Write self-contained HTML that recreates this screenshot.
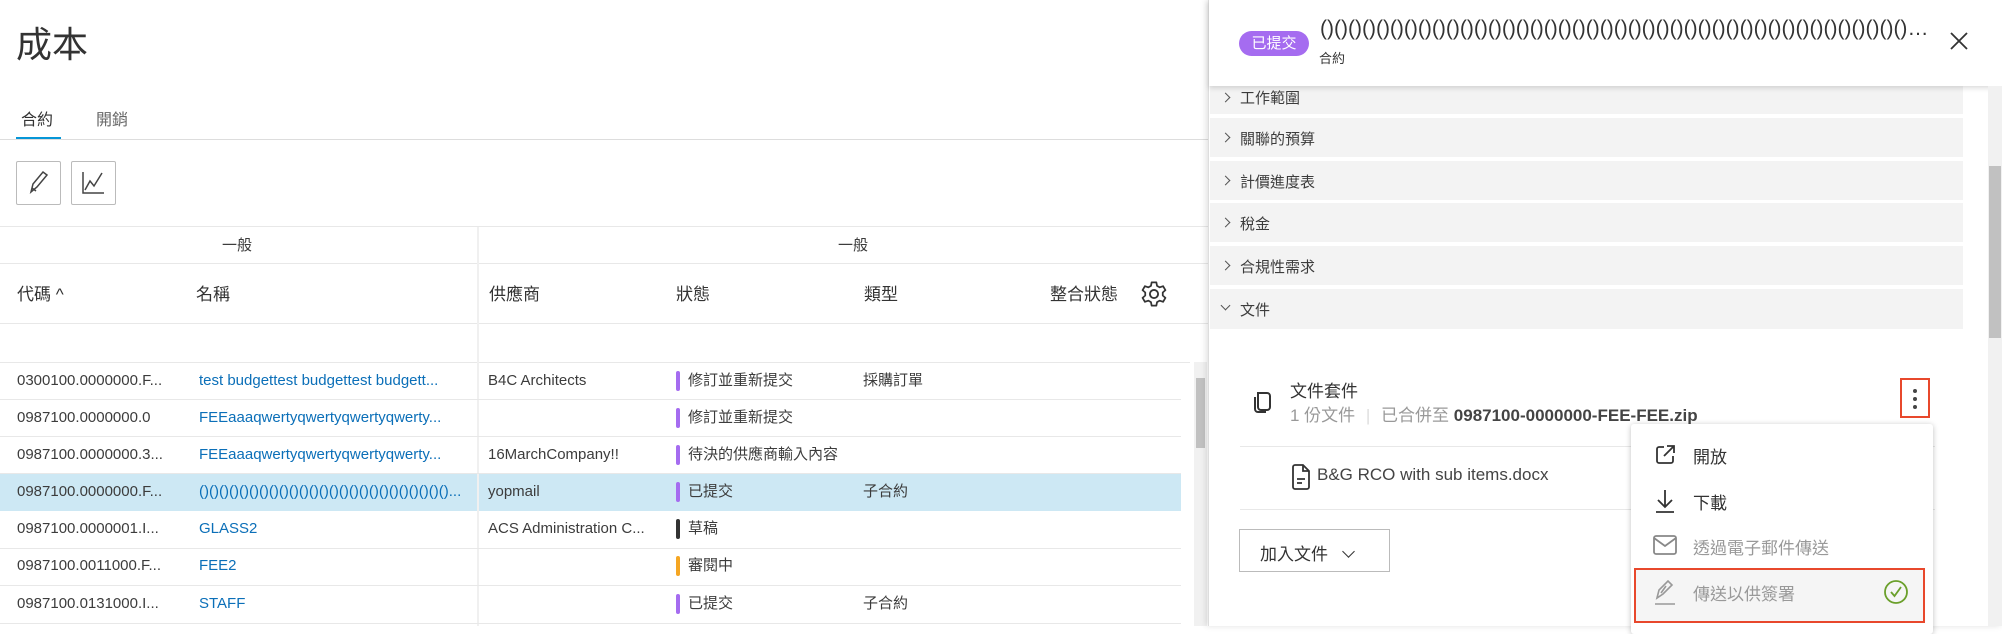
<!DOCTYPE html>
<html><head><meta charset="utf-8">
<style>
*{box-sizing:border-box;margin:0;padding:0}
body{width:2002px;height:626px;overflow:hidden;background:#fff;font-family:"Liberation Sans","Noto Sans CJK TC",sans-serif;color:#3c3c3c;position:relative}
.a{position:absolute;white-space:nowrap}
.t{font-size:15px;color:#3c3c3c;line-height:20px}
.lnk{color:#0b6fb8}
.bar{position:absolute;width:4px;height:20px;border-radius:2px}
.acc{position:absolute;left:1210px;width:753px;height:39px;background:#f3f3f3;font-size:15px;color:#3c3c3c}
.acc span{position:absolute;left:30px;top:10px}
.acc i{position:absolute;left:12px;top:16px;width:7px;height:7px;border-right:1.5px solid #555;border-top:1.5px solid #555;transform:rotate(45deg)}
.hl{position:absolute;left:0;height:1px;background:#e8e8e8}
</style></head><body>
<div class="a" style="left:16px;top:16px;font-size:36px;color:#333">成本</div>
<div class="a" style="left:21px;top:106px;font-size:16px;color:#333">合約</div>
<div class="a" style="left:96px;top:106px;font-size:16px;color:#666">開銷</div>
<div class="a" style="left:16px;top:137px;width:45px;height:3px;background:#0696d7"></div>
<div class="hl" style="top:139px;width:1209px;background:#ddd"></div>
<div class="a" style="left:16px;top:161px;width:45px;height:44px;border:1px solid #bbb;border-radius:2px"><svg width="43" height="42" viewBox="0 0 43 42"><path d="M14 30l2-8 10-12 4 3-10 12z M15 26l4 3" fill="none" stroke="#444" stroke-width="1.5"/></svg></div>
<div class="a" style="left:71px;top:161px;width:45px;height:44px;border:1px solid #bbb;border-radius:2px"><svg width="43" height="42" viewBox="0 0 43 42"><path d="M11 10v21h21 M13 28l5-9 4 5 8-13" fill="none" stroke="#444" stroke-width="1.5"/></svg></div>
<!-- table -->
<div class="hl" style="top:226px;width:1209px"></div>
<div class="a t" style="left:222px;top:236px">一般</div>
<div class="a t" style="left:838px;top:236px">一般</div>
<div class="hl" style="top:263px;width:1209px"></div>
<div class="a" style="left:17px;top:280px;font-size:17px;color:#333">代碼 ^</div>
<div class="a" style="left:196px;top:280px;font-size:17px;color:#333">名稱</div>
<div class="a" style="left:489px;top:280px;font-size:17px;color:#333">供應商</div>
<div class="a" style="left:676px;top:280px;font-size:17px;color:#333">狀態</div>
<div class="a" style="left:864px;top:280px;font-size:17px;color:#333">類型</div>
<div class="a" style="left:1050px;top:280px;font-size:17px;color:#333">整合狀態</div>
<svg class="a" style="left:1140px;top:280px" width="28" height="28" viewBox="0 0 24 24"><circle cx="12" cy="12" r="3.5" fill="none" stroke="#333" stroke-width="1.6"/><path d="M10 2h4l.6 3 2.3 1.3 2.9-1 2 3.4-2.3 2v2.6l2.3 2-2 3.4-2.9-1-2.3 1.3-.6 3h-4l-.6-3-2.3-1.3-2.9 1-2-3.4 2.3-2v-2.6l-2.3-2 2-3.4 2.9 1L9.4 5z" fill="none" stroke="#333" stroke-width="1.5" stroke-linejoin="round"/></svg>
<div class="hl" style="top:323px;width:1209px"></div>
<div class="hl" style="top:362px;width:1190px"></div>
<div class="a" style="left:0;top:474px;width:1181px;height:37px;background:#cde8f4"></div>
<div class="a" style="left:477px;top:227px;width:2px;height:399px;background:#f0f0f0"></div>
<div class="a" style="left:1194px;top:362px;width:13px;height:264px;background:#f1f1f1"></div>
<div class="a" style="left:1196px;top:378px;width:9px;height:70px;background:#c1c1c1"></div>
<div class="hl" style="top:399px;width:1181px"></div>
<div class="hl" style="top:436px;width:1181px"></div>
<div class="hl" style="top:473px;width:1181px"></div>
<div class="hl" style="top:548px;width:1181px"></div>
<div class="hl" style="top:585px;width:1181px"></div>
<div class="hl" style="top:623px;width:1181px"></div>
<!-- rows -->
<div class="a t" style="left:17px;top:371px">0300100.0000000.F...</div><div class="a t lnk" style="left:199px;top:371px">test budgettest budgettest budgett...</div><div class="a t" style="left:488px;top:371px">B4C Architects</div><div class="bar" style="left:676px;top:371px;background:#a56cf0"></div><div class="a t" style="left:688px;top:371px">修訂並重新提交</div><div class="a t" style="left:863px;top:371px">採購訂單</div>
<div class="a t" style="left:17px;top:408px">0987100.0000000.0</div><div class="a t lnk" style="left:199px;top:408px">FEEaaaqwertyqwertyqwertyqwerty...</div><div class="bar" style="left:676px;top:408px;background:#a56cf0"></div><div class="a t" style="left:688px;top:408px">修訂並重新提交</div>
<div class="a t" style="left:17px;top:445px">0987100.0000000.3...</div><div class="a t lnk" style="left:199px;top:445px">FEEaaaqwertyqwertyqwertyqwerty...</div><div class="a t" style="left:488px;top:445px">16MarchCompany!!</div><div class="bar" style="left:676px;top:445px;background:#a56cf0"></div><div class="a t" style="left:688px;top:445px">待決的供應商輸入內容</div>
<div class="a t" style="left:17px;top:482px">0987100.0000000.F...</div><div class="a t lnk" style="left:199px;top:482px">()()()()()()()()()()()()()()()()()()()()()()()()()...</div><div class="a t" style="left:488px;top:482px">yopmail</div><div class="bar" style="left:676px;top:482px;background:#a56cf0"></div><div class="a t" style="left:688px;top:482px">已提交</div><div class="a t" style="left:863px;top:482px">子合約</div>
<div class="a t" style="left:17px;top:519px">0987100.0000001.I...</div><div class="a t lnk" style="left:199px;top:519px">GLASS2</div><div class="a t" style="left:488px;top:519px">ACS Administration C...</div><div class="bar" style="left:676px;top:519px;background:#333"></div><div class="a t" style="left:688px;top:519px">草稿</div>
<div class="a t" style="left:17px;top:556px">0987100.0011000.F...</div><div class="a t lnk" style="left:199px;top:556px">FEE2</div><div class="bar" style="left:676px;top:556px;background:#f5a623"></div><div class="a t" style="left:688px;top:556px">審閱中</div>
<div class="a t" style="left:17px;top:594px">0987100.0131000.I...</div><div class="a t lnk" style="left:199px;top:594px">STAFF</div><div class="bar" style="left:676px;top:594px;background:#a56cf0"></div><div class="a t" style="left:688px;top:594px">已提交</div><div class="a t" style="left:863px;top:594px">子合約</div>
<!-- panel -->
<div class="a" style="left:1208px;top:0;width:794px;height:626px;background:#fff;border-left:1px solid #ddd;box-shadow:-2px 0 6px rgba(0,0,0,.12)"></div>
<div class="acc" style="top:81px;height:33px"><i style="top:13px"></i><span style="top:6px">工作範圍</span></div>
<div class="acc" style="top:118px"><i></i><span>關聯的預算</span></div>
<div class="acc" style="top:161px"><i></i><span>計價進度表</span></div>
<div class="acc" style="top:203px"><i></i><span>稅金</span></div>
<div class="acc" style="top:246px"><i></i><span>合規性需求</span></div>
<div class="acc" style="top:289px;height:40px"><i style="transform:rotate(135deg);top:13px"></i><span>文件</span></div>
<div class="a" style="left:1209px;top:0;width:793px;height:86px;background:#fff;box-shadow:0 2px 5px rgba(0,0,0,.15)"></div>
<div class="a" style="left:1239px;top:31px;width:70px;height:25px;border-radius:13px;background:#a56cf0;color:#fff;font-size:15px;text-align:center;line-height:25px">已提交</div>
<div class="a" style="left:1320px;top:17px;width:614px;overflow:hidden;text-overflow:ellipsis;font-size:21px;color:#333;font-family:'Liberation Sans Narrow','Liberation Sans',sans-serif">()()()()()()()()()()()()()()()()()()()()()()()()()()()()()()()()()()()()()()()()()()()()()()()()()()()()()()()()()</div>
<div class="a" style="left:1319px;top:48px;font-size:13px;color:#333">合約</div>
<svg class="a" style="left:1948px;top:30px" width="22" height="22"><path d="M3 3l16 16M19 3L3 19" stroke="#333" stroke-width="1.8"/></svg>
<div class="a" style="left:1988px;top:86px;width:14px;height:540px;background:#f1f1f1"></div>
<div class="a" style="left:1989px;top:166px;width:12px;height:172px;background:#c1c1c1"></div>
<svg class="a" style="left:1250px;top:388px" width="24" height="28" viewBox="0 0 24 28"><path d="M8 5h9a3 3 0 0 1 3 3v11a3 3 0 0 1-3 3H11a3 3 0 0 1-3-3z M5 9v12a3 3 0 0 0 3 3h8" fill="none" stroke="#333" stroke-width="2"/></svg>
<div class="a" style="left:1290px;top:377px;font-size:17px;color:#333">文件套件</div>
<div class="a" style="left:1290px;top:401px;font-size:17px;color:#999">1 份文件 <span style="color:#ddd;margin:0 6px">|</span> 已合併至 <b style="color:#444">0987100-0000000-FEE-FEE.zip</b></div>
<div class="a" style="left:1900px;top:378px;width:30px;height:40px;border:2px solid #e8482c"></div>
<div class="a" style="left:1913px;top:389px;width:4px;height:4px;border-radius:2px;background:#444;box-shadow:0 8px 0 #444,0 16px 0 #444"></div>
<div class="hl" style="left:1240px;top:446px;width:695px"></div>
<svg class="a" style="left:1290px;top:463px" width="22" height="28" viewBox="0 0 22 28"><path d="M3 4a2 2 0 0 1 2-2h8l6 6v16a2 2 0 0 1-2 2H5a2 2 0 0 1-2-2z M13 2v6h6 M7 16h8 M7 20h5" fill="none" stroke="#333" stroke-width="1.8"/></svg>
<div class="a" style="left:1317px;top:465px;font-size:17px;color:#444">B&amp;G RCO with sub items.docx</div>
<div class="hl" style="left:1240px;top:509px;width:695px"></div>
<div class="a" style="left:1239px;top:529px;width:151px;height:43px;border:1px solid #bbb;font-size:17px;color:#333;padding:10px 0 0 20px">加入文件<span style="display:inline-block;width:9px;height:9px;border-right:1.8px solid #333;border-bottom:1.8px solid #333;transform:rotate(45deg);margin:0 0 4px 16px"></span></div>
<!-- menu -->
<div class="a" style="left:1631px;top:424px;width:302px;height:210px;background:#fff;border-radius:3px;box-shadow:0 1px 6px rgba(0,0,0,.25)"></div>
<svg class="a" style="left:1653px;top:443px" width="24" height="24" viewBox="0 0 24 24"><path d="M11 4H6a2 2 0 0 0-2 2v12a2 2 0 0 0 2 2h12a2 2 0 0 0 2-2v-5 M14 3h7v7 M21 3l-10 10" fill="none" stroke="#333" stroke-width="1.8"/></svg>
<div class="a" style="left:1693px;top:443px;font-size:17px;color:#333">開放</div>
<svg class="a" style="left:1653px;top:488px" width="24" height="26" viewBox="0 0 24 26"><path d="M12 2v16 M5 12l7 7 7-7 M3 24h18" fill="none" stroke="#333" stroke-width="1.8"/></svg>
<div class="a" style="left:1693px;top:489px;font-size:17px;color:#333">下載</div>
<svg class="a" style="left:1652px;top:533px" width="26" height="24" viewBox="0 0 26 24"><rect x="2" y="3" width="22" height="18" rx="2" fill="none" stroke="#888" stroke-width="1.8"/><path d="M2 5l11 8 11-8" fill="none" stroke="#888" stroke-width="1.8"/></svg>
<div class="a" style="left:1693px;top:534px;font-size:17px;color:#999">透過電子郵件傳送</div>
<div class="a" style="left:1634px;top:568px;width:291px;height:55px;background:#f5f5f5;border:2px solid #e8482c"></div>
<svg class="a" style="left:1652px;top:578px" width="26" height="28" viewBox="0 0 26 28"><path d="M5 20l2-8 9-9 4 4-9 9z M3 26h20 M14 8l-5 7" fill="none" stroke="#999" stroke-width="1.6"/></svg>
<div class="a" style="left:1693px;top:580px;font-size:17px;color:#999">傳送以供簽署</div>
<svg class="a" style="left:1883px;top:579px" width="26" height="26" viewBox="0 0 26 26"><circle cx="13" cy="13" r="11" fill="none" stroke="#6a9f2a" stroke-width="1.8"/><path d="M8 13l3.5 4L18 8" fill="none" stroke="#6a9f2a" stroke-width="1.8"/></svg>
</body></html>
